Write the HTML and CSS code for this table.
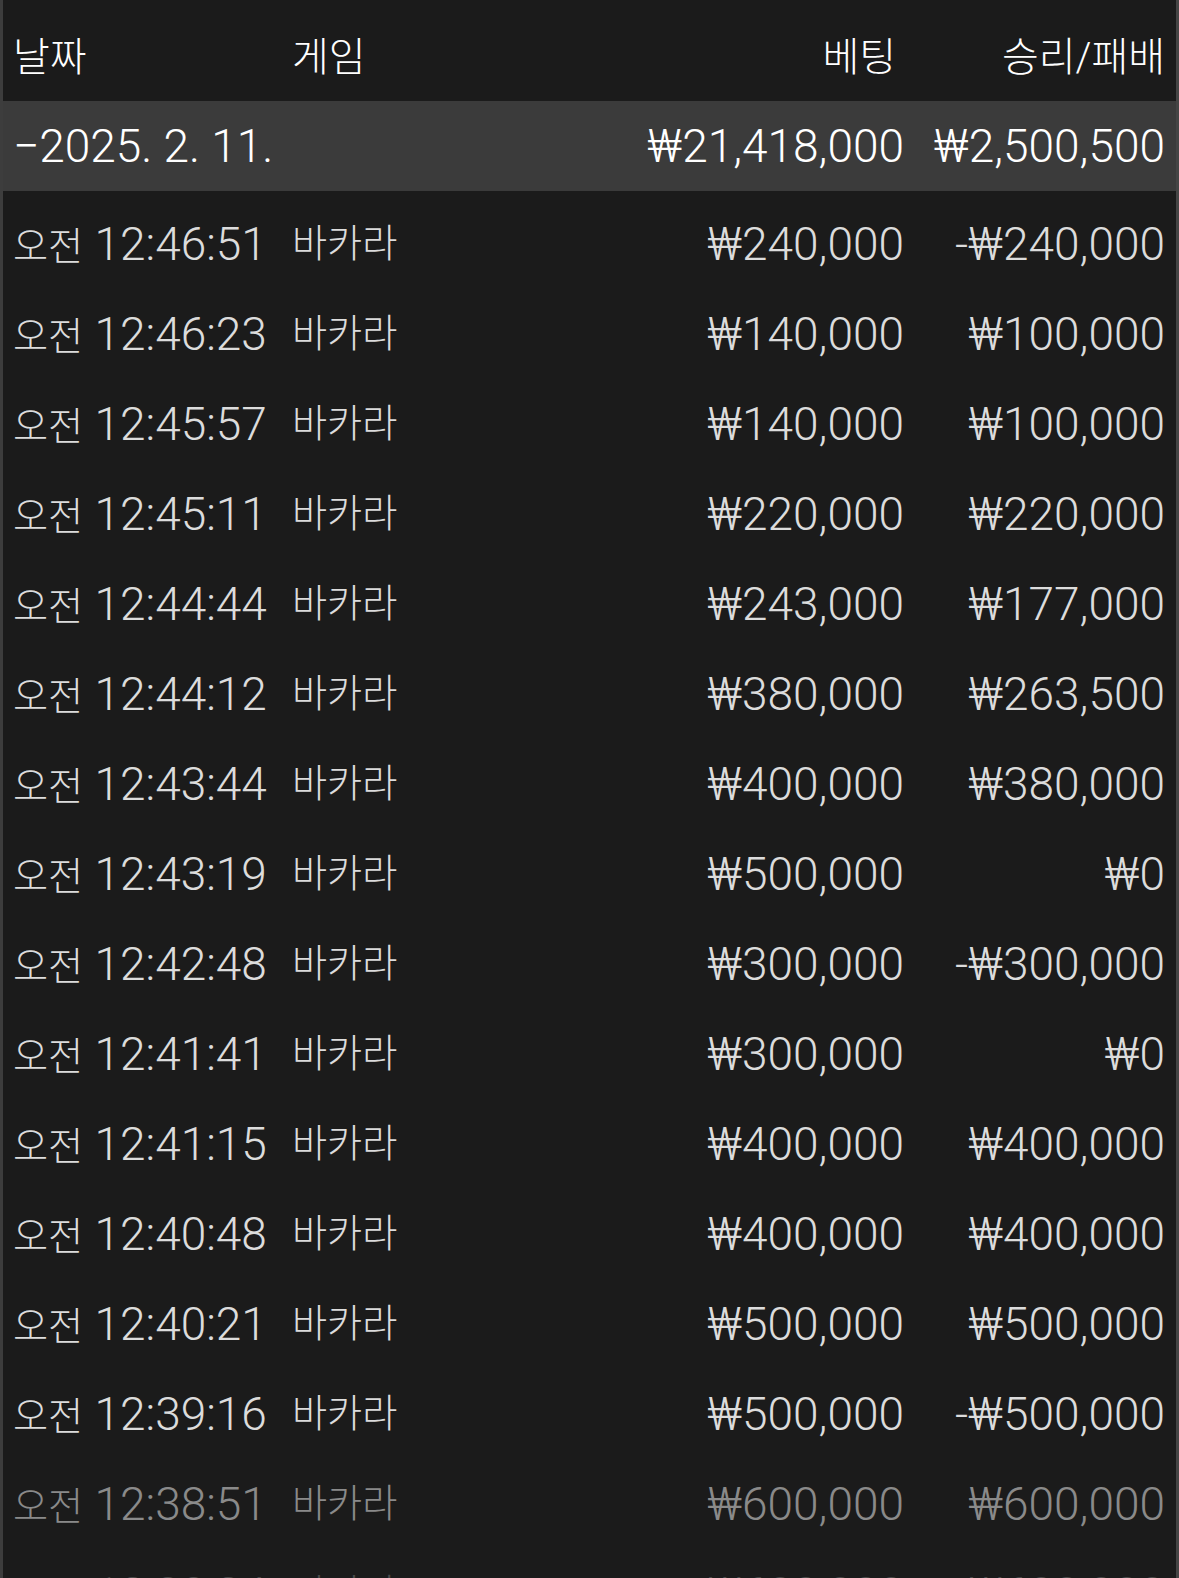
FILE: index.html
```html
<!DOCTYPE html>
<html>
<head>
    <title>베팅 내역</title>
    <link rel="stylesheet" href="styles.css">
</head>
<body>
    <div class="history">
        <!-- Column titles -->
        <div class="row head">
            <div class="ko">날짜</div>
            <div class="ko">게임</div>
            <div class="num ko bet-title">베팅</div>
            <div class="num ko">승리/패배</div>
        </div>

        <!-- Day summary -->
        <div class="row day">
            <div class="day-label">&minus;2025. 2. 11.</div>
            <div class="num">₩21,418,000</div>
            <div class="num">₩2,500,500</div>
        </div>

        <div class="list">
            <div class="row item"><div><span class="ko">오전</span> 12:46:51</div><div class="ko">바카라</div><div class="num">₩240,000</div><div class="num">-₩240,000</div></div>
            <div class="row item"><div><span class="ko">오전</span> 12:46:23</div><div class="ko">바카라</div><div class="num">₩140,000</div><div class="num">₩100,000</div></div>
            <div class="row item"><div><span class="ko">오전</span> 12:45:57</div><div class="ko">바카라</div><div class="num">₩140,000</div><div class="num">₩100,000</div></div>
            <div class="row item"><div><span class="ko">오전</span> 12:45:11</div><div class="ko">바카라</div><div class="num">₩220,000</div><div class="num">₩220,000</div></div>
            <div class="row item"><div><span class="ko">오전</span> 12:44:44</div><div class="ko">바카라</div><div class="num">₩243,000</div><div class="num">₩177,000</div></div>
            <div class="row item"><div><span class="ko">오전</span> 12:44:12</div><div class="ko">바카라</div><div class="num">₩380,000</div><div class="num">₩263,500</div></div>
            <div class="row item"><div><span class="ko">오전</span> 12:43:44</div><div class="ko">바카라</div><div class="num">₩400,000</div><div class="num">₩380,000</div></div>
            <div class="row item"><div><span class="ko">오전</span> 12:43:19</div><div class="ko">바카라</div><div class="num">₩500,000</div><div class="num">₩0</div></div>
            <div class="row item"><div><span class="ko">오전</span> 12:42:48</div><div class="ko">바카라</div><div class="num">₩300,000</div><div class="num">-₩300,000</div></div>
            <div class="row item"><div><span class="ko">오전</span> 12:41:41</div><div class="ko">바카라</div><div class="num">₩300,000</div><div class="num">₩0</div></div>
            <div class="row item"><div><span class="ko">오전</span> 12:41:15</div><div class="ko">바카라</div><div class="num">₩400,000</div><div class="num">₩400,000</div></div>
            <div class="row item"><div><span class="ko">오전</span> 12:40:48</div><div class="ko">바카라</div><div class="num">₩400,000</div><div class="num">₩400,000</div></div>
            <div class="row item"><div><span class="ko">오전</span> 12:40:21</div><div class="ko">바카라</div><div class="num">₩500,000</div><div class="num">₩500,000</div></div>
            <div class="row item"><div><span class="ko">오전</span> 12:39:16</div><div class="ko">바카라</div><div class="num">₩500,000</div><div class="num">-₩500,000</div></div>
            <!-- rows fading out at the bottom edge -->
            <div class="row item fade"><div><span class="ko">오전</span> 12:38:51</div><div class="ko">바카라</div><div class="num">₩600,000</div><div class="num">₩600,000</div></div>
            <div class="row item fade-more"><div><span class="ko">오전</span> 12:38:24</div><div class="ko">바카라</div><div class="num">₩600,000</div><div class="num">₩600,000</div></div>
        </div>
    </div>
</body>
</html>
```
FILE: styles.css
```css
body {
    margin: 0;
    height: 1578px;
    overflow: hidden;
    background: #1b1b1b;
    font-family: Roboto, "Noto Sans CJK KR", sans-serif;
    font-weight: 300;
    color: #dcdcdc;
}

.history {
    height: 100%;
    border-left: 3px solid #3d3d3d;
    border-right: 3px solid #454545;
}

/* four columns: date, game, bet, win/loss */
.row {
    display: grid;
    grid-template-columns: 279px 1fr 300px 261px;
    align-items: center;
    padding: 0 11px 0 10px;
    font-size: 46px;
    line-height: 1;
    white-space: nowrap;
}

.num {
    text-align: right;
}

/* hangul glyphs are drawn smaller than the digits */
.ko {
    font-size: 0.83em;
}

.head {
    height: 101px;
    padding-top: 14px;
    box-sizing: border-box;
    color: #fff;
}

.head .ko {
    font-size: 40px;
}

.bet-title {
    padding-right: 8px;
}

.day {
    height: 90px;
    background: #3b3b3b;
    color: #fff;
}

.day-label {
    grid-column: 1 / 3;
}

.list {
    padding-top: 8px;
}

.item {
    height: 90px;
}

.fade {
    color: #8a8a8a;
}

.fade-more {
    color: #4a4a4a;
}
```
